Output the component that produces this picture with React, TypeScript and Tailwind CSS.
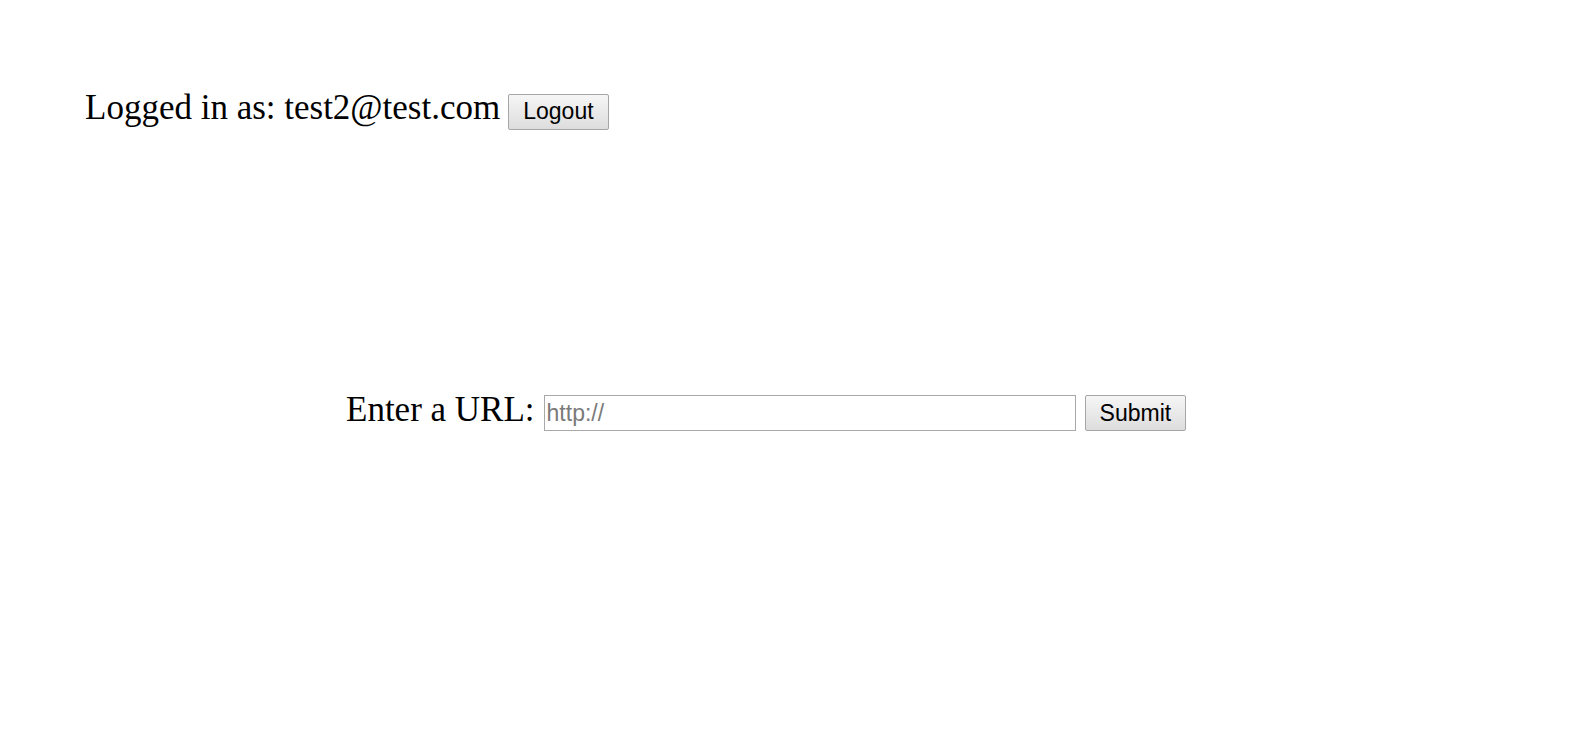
import React from "react";

export default function App() {
  const btn =
    "h-[36px] px-[14px] border border-[#a6a6a6] rounded-[2px] bg-gradient-to-b from-[#f6f6f6] to-[#dddddd] text-[23px] leading-none text-black [font-family:'Liberation_Sans',Arial,sans-serif]";
  return (
    <div className="min-h-[734px] bg-white text-black [font-family:'Liberation_Serif','Times_New_Roman',serif] text-[35px]">
      <div className="pt-[88px] pl-[85px] flex items-baseline gap-[8px]">
        <span className="leading-[40px]">Logged in as: test2@test.com</span>
        <button className={btn}>Logout</button>
      </div>
      <div className="mt-[260px] pl-[346px] flex items-baseline">
        <span className="leading-[40px] mr-[9px]">Enter a URL:</span>
        <input
          type="text"
          placeholder="http://"
          className="w-[532px] h-[36px] border border-[#a9a9a9] px-[2px] text-[23px] placeholder:text-[#7a7a7a] outline-none [font-family:'Liberation_Sans',Arial,sans-serif]"
        />
        <button className={btn + " ml-[9px]"}>Submit</button>
      </div>
    </div>
  );
}
